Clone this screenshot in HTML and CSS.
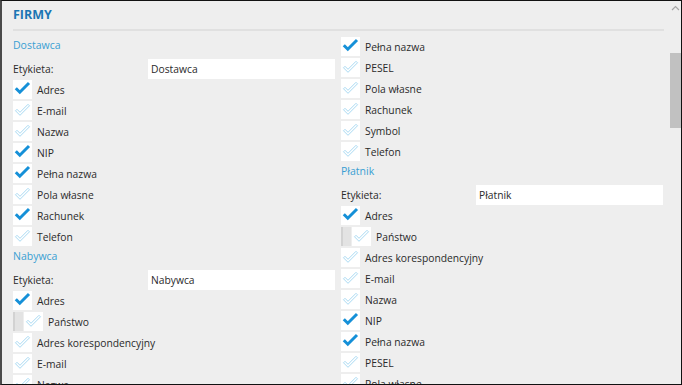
FILE: index.html
```html
<!DOCTYPE html>
<html lang="pl">
<head>
  <meta charset="UTF-8">
  <meta name="viewport" content="width=device-width, initial-scale=1.0">
  <link rel="stylesheet" href="styles.css">
</head>
<body>
  <svg width="0" height="0" class="defs">
    <symbol id="chk-on" viewBox="0 0 19 19">
      <path d="M2.8 8.2 L6.8 12.2 L16 3" fill="none" stroke="#1590d8" stroke-width="3"/>
    </symbol>
    <symbol id="chk-off" viewBox="0 0 19 19">
      <path d="M2.5 9.8 L4 8.3 L7 11.3 L15 3.3 L16.5 4.8 L7 14.3 Z" fill="none" stroke="#a9daf3" stroke-width="1" stroke-linejoin="round"/>
    </symbol>
  </svg>

  <div class="window">
    <div class="main">
      <div class="header">FIRMY</div>

      <div class="columns">
        <div class="column">
          <div class="section-title">Dostawca</div>
          <div class="label-row">
            <span class="label">Etykieta:</span>
            <input class="text-input" type="text" value="Dostawca">
          </div>
          <div class="check-row"><span class="box"><svg><use href="#chk-on"/></svg></span>Adres</div>
          <div class="check-row"><span class="box"><svg><use href="#chk-off"/></svg></span>E-mail</div>
          <div class="check-row"><span class="box"><svg><use href="#chk-off"/></svg></span>Nazwa</div>
          <div class="check-row"><span class="box"><svg><use href="#chk-on"/></svg></span>NIP</div>
          <div class="check-row"><span class="box"><svg><use href="#chk-on"/></svg></span>Pełna nazwa</div>
          <div class="check-row"><span class="box"><svg><use href="#chk-off"/></svg></span>Pola własne</div>
          <div class="check-row"><span class="box"><svg><use href="#chk-on"/></svg></span>Rachunek</div>
          <div class="check-row"><span class="box"><svg><use href="#chk-off"/></svg></span>Telefon</div>

          <div class="section-title">Nabywca</div>
          <div class="label-row">
            <span class="label">Etykieta:</span>
            <input class="text-input" type="text" value="Nabywca">
          </div>
          <div class="check-row"><span class="box"><svg><use href="#chk-on"/></svg></span>Adres</div>
          <div class="check-row sub"><span class="indent"></span><span class="box"><svg><use href="#chk-off"/></svg></span>Państwo</div>
          <div class="check-row"><span class="box"><svg><use href="#chk-off"/></svg></span>Adres korespondencyjny</div>
          <div class="check-row"><span class="box"><svg><use href="#chk-off"/></svg></span>E-mail</div>
          <div class="check-row"><span class="box"><svg><use href="#chk-off"/></svg></span>Nazwa</div>
          <div class="check-row"><span class="box"><svg><use href="#chk-on"/></svg></span>NIP</div>
        </div>

        <div class="column">
          <div class="check-row"><span class="box"><svg><use href="#chk-on"/></svg></span>Pełna nazwa</div>
          <div class="check-row"><span class="box"><svg><use href="#chk-off"/></svg></span>PESEL</div>
          <div class="check-row"><span class="box"><svg><use href="#chk-off"/></svg></span>Pola własne</div>
          <div class="check-row"><span class="box"><svg><use href="#chk-off"/></svg></span>Rachunek</div>
          <div class="check-row"><span class="box"><svg><use href="#chk-off"/></svg></span>Symbol</div>
          <div class="check-row"><span class="box"><svg><use href="#chk-off"/></svg></span>Telefon</div>

          <div class="section-title">Płatnik</div>
          <div class="label-row">
            <span class="label">Etykieta:</span>
            <input class="text-input" type="text" value="Płatnik">
          </div>
          <div class="check-row"><span class="box"><svg><use href="#chk-on"/></svg></span>Adres</div>
          <div class="check-row sub"><span class="indent"></span><span class="box"><svg><use href="#chk-off"/></svg></span>Państwo</div>
          <div class="check-row"><span class="box"><svg><use href="#chk-off"/></svg></span>Adres korespondencyjny</div>
          <div class="check-row"><span class="box"><svg><use href="#chk-off"/></svg></span>E-mail</div>
          <div class="check-row"><span class="box"><svg><use href="#chk-off"/></svg></span>Nazwa</div>
          <div class="check-row"><span class="box"><svg><use href="#chk-on"/></svg></span>NIP</div>
          <div class="check-row"><span class="box"><svg><use href="#chk-on"/></svg></span>Pełna nazwa</div>
          <div class="check-row"><span class="box"><svg><use href="#chk-off"/></svg></span>PESEL</div>
          <div class="check-row"><span class="box"><svg><use href="#chk-off"/></svg></span>Pola własne</div>
          <div class="check-row"><span class="box"><svg><use href="#chk-off"/></svg></span>Rachunek</div>
        </div>
      </div>
    </div>

    <div class="scrollbar">
      <svg class="scroll-arrow" width="11" height="8" viewBox="0 0 11 8">
        <path d="M2 6 L5.5 2.5 L9 6" fill="none" stroke="#a6a6a6" stroke-width="1.2"/>
      </svg>
      <div class="scroll-thumb"></div>
    </div>
  </div>
</body>
</html>
```

FILE: styles.css
```css
body {
  margin: 0;
  font-family: 'Open Sans', 'Noto Sans', sans-serif;
  font-size: 10.3px;
  color: #2a2a2a;
  background: #eeeeee;
}

.defs {
  position: absolute;
}

.window {
  width: 682px;
  height: 385px;
  box-sizing: border-box;
  border-top: 1px solid #111111;
  border-right: 1px solid #111111;
  border-bottom: 1px solid #111111;
  border-left: 2px solid #4a4a4a;
  background: #eeeeee;
  display: flex;
  overflow: hidden;
}

.main {
  flex: 1;
  min-width: 0;
  overflow: hidden;
}

.header {
  height: 28px;
  line-height: 28px;
  margin: 0 6px 0 11px;
  border-bottom: 2px solid #e0e0e0;
  font-size: 12.5px;
  font-weight: 700;
  color: #1b76b4;
}

.columns {
  display: flex;
  gap: 6px;
  padding: 5px 7px 0 11px;
}

.column {
  flex: 1;
  min-width: 0;
}

.section-title {
  height: 18px;
  line-height: 18px;
  color: #3a9fd3;
  font-size: 10.5px;
}

.label-row {
  display: flex;
  align-items: center;
  height: 20px;
  margin-top: 5px;
}

.label {
  width: 135px;
  flex: none;
}

.text-input {
  flex: 1;
  min-width: 0;
  height: 20px;
  box-sizing: border-box;
  border: none;
  background: #ffffff;
  padding: 0 3px;
  font-family: inherit;
  font-size: inherit;
  color: #2a2a2a;
  outline: none;
}

.check-row {
  display: flex;
  align-items: center;
  height: 21px;
}

.box {
  width: 19px;
  height: 19px;
  background: #ffffff;
  margin-right: 5px;
  flex: none;
}

.box svg {
  width: 19px;
  height: 19px;
  display: block;
}

.indent {
  width: 8px;
  height: 19px;
  margin-right: 1px;
  flex: none;
  background: #e3e3e3;
  border-left: 2px solid #d2d2d2;
}

.scrollbar {
  width: 11px;
  flex: none;
  display: flex;
  flex-direction: column;
  align-items: center;
}

.scroll-arrow {
  margin-top: 3px;
  display: block;
}

.scroll-thumb {
  width: 11px;
  height: 75px;
  margin-top: 41px;
  background: #c1c1c1;
}
```
